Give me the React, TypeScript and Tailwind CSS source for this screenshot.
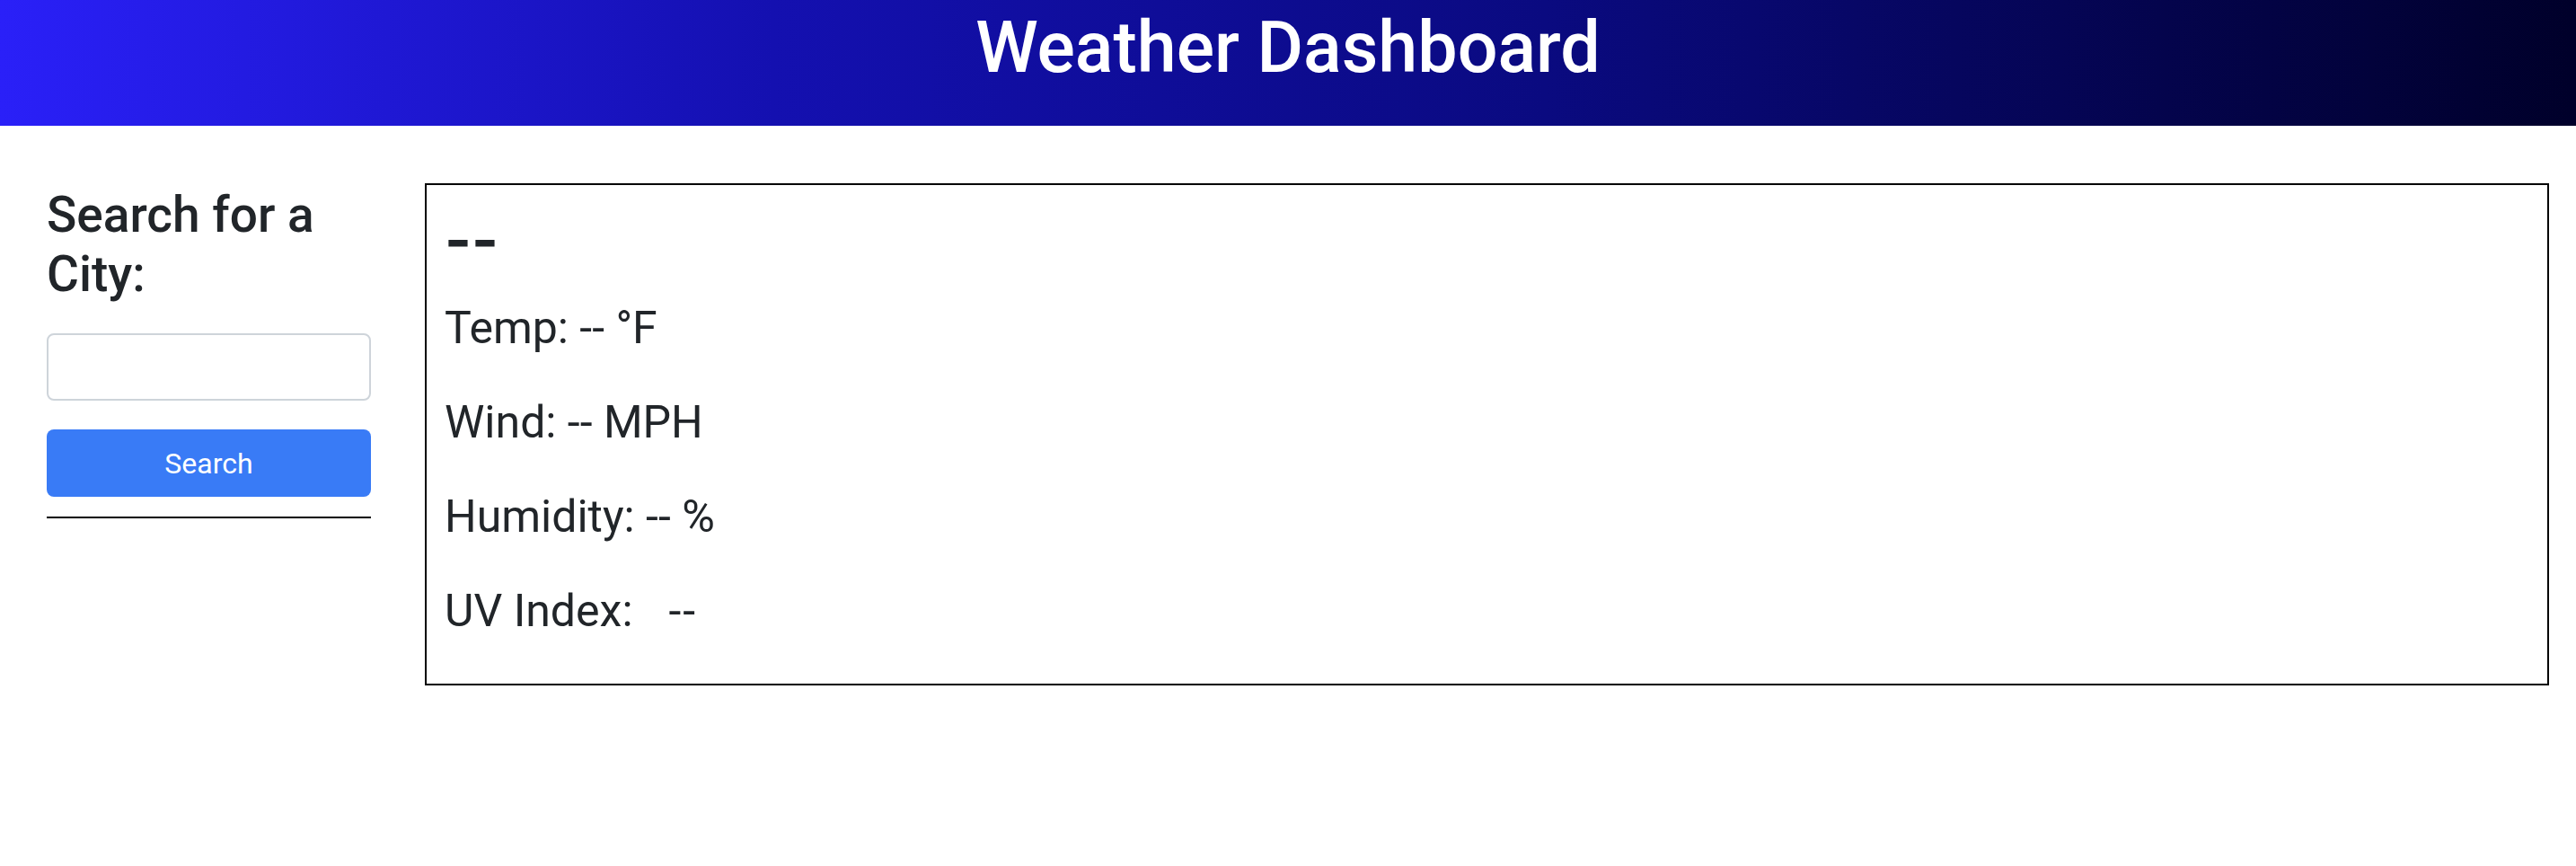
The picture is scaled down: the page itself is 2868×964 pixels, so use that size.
import React from "react";

export default function App() {
  return (
    <div className="min-h-[964px] bg-white font-['Roboto','Inter',sans-serif] text-[#212529]">
      <header className="h-[140px] bg-[linear-gradient(to_right,#2a20f8_0%,#1410b0_30%,#0a0a80_60%,#00002a_100%)] text-center">
        <h1 className="pt-[8px] text-[79px] leading-[90px] font-medium text-white">
          Weather Dashboard
        </h1>
      </header>
      <main className="flex gap-[60px] pt-[64px] pl-[52px] pr-[30px]">
        <aside className="w-[361px] shrink-0 pt-[2px]">
          <h3 className="mb-[33px] text-[55px] font-medium leading-[1.2]">
            Search for a City:
          </h3>
          <input
            type="text"
            className="block h-[75px] w-full rounded-[8px] border-2 border-[#ced4da] bg-white px-[24px] text-[32px] outline-none"
          />
          <button className="mt-[32px] block h-[75px] w-full rounded-[8px] bg-[#397bf6] text-[32px] leading-none text-white">
            Search
          </button>
          <hr className="mt-[22px] border-0 border-t-2 border-black" />
        </aside>
        <section className="h-[559px] flex-1 border-2 border-black px-[20px] pt-[23px]">
          <h2 className="mb-[22px] font-['Inter',sans-serif] text-[64px] font-bold leading-[1.2]">--</h2>
          <p className="mb-[31px] text-[50px] leading-[74px]">Temp: -- °F</p>
          <p className="mb-[31px] text-[50px] leading-[74px]">Wind: -- MPH</p>
          <p className="mb-[31px] text-[50px] leading-[74px]">Humidity: -- %</p>
          <p className="text-[50px] leading-[74px]">
            UV Index:<span className="ml-[40px] tracking-[2px]">--</span>
          </p>
        </section>
      </main>
    </div>
  );
}
